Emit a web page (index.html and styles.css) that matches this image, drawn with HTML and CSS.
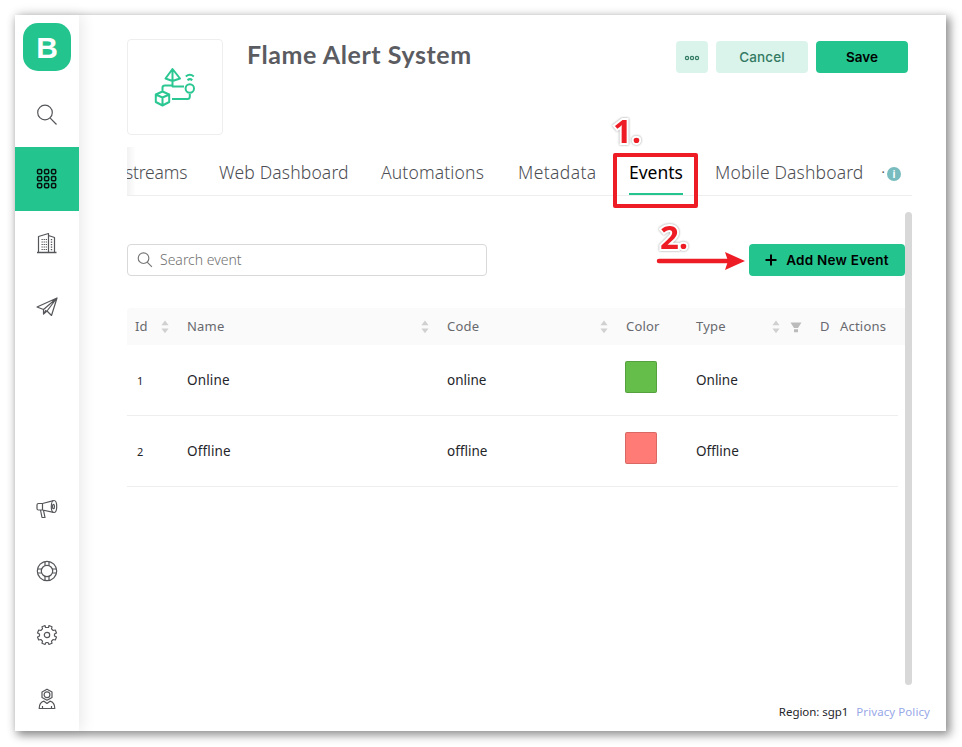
FILE: index.html
```html
<!DOCTYPE html>
<html lang="en">
<head>
<meta charset="utf-8">
<title>Flame Alert System</title>
<link rel="stylesheet" href="styles.css">
</head>
<body>
<svg width="0" height="0" class="defs">
  <symbol id="sorter" viewBox="0 0 8 14"><path d="M4 .5 7.6 5.2H.4zM4 13.2.4 8.5h7.2z" fill="#d0d0d0"/></symbol>
  <symbol id="search" viewBox="0 0 22 22"><circle cx="9" cy="8.500" r="7.300"/><path d="M14 13.800 20.500 20.500"/></symbol>
</svg>
<div class="window">
  <nav class="sidebar">
    <div class="logo">B</div>
    <a class="nav-item"><svg class="icon" viewBox="0 0 22 22"><use href="#search"/></svg></a>
    <a class="nav-item active"><svg class="icon grid-icon" viewBox="0 0 22 22">
      <rect x="1.500" y="1.500" width="4.200" height="4.200" rx="1.200"/><rect x="8.500" y="1.500" width="4.200" height="4.200" rx="1.200"/><rect x="15.500" y="1.500" width="4.200" height="4.200" rx="1.200"/>
      <rect x="1.500" y="8.500" width="4.200" height="4.200" rx="1.200"/><rect x="8.500" y="8.500" width="4.200" height="4.200" rx="1.200"/><rect x="15.500" y="8.500" width="4.200" height="4.200" rx="1.200"/>
      <rect x="1.500" y="15.500" width="4.200" height="4.200" rx="1.200"/><rect x="8.500" y="15.500" width="4.200" height="4.200" rx="1.200"/><rect x="15.500" y="15.500" width="4.200" height="4.200" rx="1.200"/></svg></a>
    <a class="nav-item"><svg class="icon" viewBox="0 0 22 22"><path d="M1 20.500h19.500" stroke-width="1.500"/><path d="M2.500 20V4.500L12.500 1.500V20M12.500 3.500 18.500 5.500V20"/><path d="M5.500 7.500h5.500M5.500 10h5.500M5.500 12.500h5.500M5.500 15h5.500M5.500 17.500h5.500" stroke-dasharray="1.300 .8" stroke-width="1.200"/><path d="M15.500 7v11.500" stroke-width="1.400" stroke-dasharray="1.300 1.200"/></svg></a>
    <a class="nav-item"><svg class="icon" viewBox="0 0 22 22"><path d="M1 11 21 2 15.500 19.500 11 15 7.500 18V13.500zM7.500 13.500 21 2 11 15M7.500 18 10 14"/></svg></a>
    <div class="spacer"></div>
    <a class="nav-item"><svg class="icon horn" viewBox="0 0 22 22"><path d="M2.500 5.500H6.500V12H2.500Q1 12 1 10.500V7Q1 5.500 2.500 5.500zM6.500 5.500 17.500 2.700M6.500 12 17.500 14.300M4.500 12 6 19.500H9L7.500 12.300"/><ellipse cx="18" cy="8.500" rx="2.700" ry="6"/><ellipse cx="17.500" cy="8.500" rx="1" ry="2.200"/></svg></a>
    <a class="nav-item"><svg class="icon" viewBox="0 0 22 22"><circle cx="11" cy="11" r="9.700"/><circle cx="11" cy="11" r="5.700"/><path d="M9 1.500V5.700M13 1.500V5.700M9 16.300v4.200M13 16.300v4.200M1.500 9h4.200M1.500 13h4.200M16.300 9h4.200M16.300 13h4.200"/></svg></a>
    <a class="nav-item"><svg class="icon" viewBox="0 0 22 22"><path d="M9 1.500 9.500 3.500H12.500L13 1.500 16 2.700 15.500 4.800 17.200 6.500 19.300 6 20.500 9 18.500 10V12L20.500 13 19.300 16 17.200 15.500 15.500 17.200 16 19.300 13 20.500 12 18.500H10L9 20.500 6 19.300 6.500 17.200 4.800 15.500 2.700 16 1.500 13 3.500 12V10L1.500 9 2.700 6 4.800 6.500 6.500 4.800 6 2.700z"/><circle cx="11" cy="11" r="2.700"/></svg></a>
    <a class="nav-item"><svg class="icon" viewBox="0 0 22 22"><path d="M11 1.200 16 4V9.500L11 12.200 6 9.500V4zM3.200 20.500Q3.200 14.500 8 13.200L11 15.500 14 13.200Q18.800 14.500 18.800 20.500zM6.500 20v-2M15.500 20v-2"/><circle cx="11" cy="6.700" r="2.900"/></svg></a>
  </nav>
  <main class="main">
    <header class="header">
      <div class="thumb"><svg class="device-icon" viewBox="0 0 44 44">
        <path d="M19.500 3 12.500 12.500 19.500 15 27 12.500zM19.500 3V15M19.500 15.500V20.500H31M9.500 25V21.500Q9.500 19.500 12 19.500H19.500M9.500 25.500 16.200 28.500V36L9.500 39.500 2.800 36V28.500zM2.800 28.500 9.500 31.500 16.200 28.500M9.500 31.500V39.500M19 33H34.500Q36.800 33 36.800 30.500V28M32.800 10.500Q36.800 7 40.800 10.500M34.500 14.200Q36.800 12 39.300 14.200"/><circle cx="36.800" cy="22.500" r="4.200"/></svg></div>
      <h1 class="title">Flame Alert System</h1>
      <div class="actions">
        <button class="btn light more"><svg width="16" height="6" viewBox="0 0 16 6"><circle cx="3" cy="3" r="1.600"/><circle cx="8" cy="3" r="1.600"/><circle cx="13" cy="3" r="1.600"/></svg></button>
        <button class="btn light cancel">Cancel</button>
        <button class="btn save">Save</button>
      </div>
    </header>
    <div class="tabs">
      <a class="tab streams">streams</a>
      <a class="tab web">Web Dashboard</a>
      <a class="tab automations">Automations</a>
      <a class="tab metadata">Metadata</a>
      <a class="tab events">Events</a>
      <a class="tab mobile">Mobile Dashboard</a>
      <span class="more-dot">·</span><span class="info">i</span>
    </div>
    <section class="content">
      <div class="toolbar">
        <label class="search"><svg class="search-icon" viewBox="0 0 22 22"><use href="#search"/></svg><span>Search event</span></label>
        <button class="btn add"><svg width="12" height="12" viewBox="0 0 12 12"><path d="M6 .5v11M.5 6h11"/></svg><span>Add New Event</span></button>
      </div>
      <div class="table">
        <div class="row head">
          <div class="cell">Id<svg class="sorter"><use href="#sorter"/></svg></div>
          <div class="cell">Name<svg class="sorter"><use href="#sorter"/></svg></div>
          <div class="cell">Code<svg class="sorter"><use href="#sorter"/></svg></div>
          <div class="cell">Color</div>
          <div class="cell type">Type<svg class="sorter"><use href="#sorter"/></svg><svg class="filter" viewBox="0 0 12 11"><path d="M.5.500h11L8 6H4zM4 7.200h4v3H4z"/></svg></div>
          <div class="cell desc">D</div>
          <div class="cell">Actions</div>
        </div>
        <div class="row item">
          <div class="cell id">1</div><div class="cell name">Online</div><div class="cell">online</div>
          <div class="cell"><i class="swatch green"></i></div><div class="cell">Online</div>
        </div>
        <div class="row item">
          <div class="cell id">2</div><div class="cell name">Offline</div><div class="cell">offline</div>
          <div class="cell"><i class="swatch red"></i></div><div class="cell">Offline</div>
        </div>
      </div>
    </section>
    <footer class="footer"><span class="region">Region: sgp1</span><a class="privacy">Privacy Policy</a></footer>
    <div class="scrollbar"></div>
  </main>
</div>
<div class="note-box"></div>
<div class="note one">1.</div>
<div class="note two">2.</div>
<svg class="note-arrow" viewBox="0 0 90 20"><path d="M3 10H74" stroke="#ee1c25" stroke-width="4.500" stroke-linecap="round"/><path d="M69 1 89 10 69 19 72 10z" fill="#ee1c25"/></svg>
</body>
</html>
```
FILE: styles.css
```css
* { box-sizing: border-box; }
body {
  margin: 0;
  width: 962px;
  height: 747px;
  padding: 15px;
  overflow: hidden;
  background: #fff;
  color: #24252a;
  font: 300 14px "Noto Sans", sans-serif;
}
.defs { position: absolute; }
.window {
  display: flex;
  width: 931px;
  height: 716px;
  background: #fff;
  box-shadow: 3px 3px 9px 1px rgba(0, 0, 0, .45);
}
.sidebar {
  display: flex;
  flex-direction: column;
  width: 64px;
  padding-top: 8px;
  box-shadow: 3px 0 14px rgba(0, 0, 0, .09);
}
.logo {
  width: 48px;
  height: 48px;
  margin: 0 8px 12px;
  border-radius: 15px;
  background: #24c48e;
  color: #fff;
  font: 700 30px/49px "Liberation Sans", sans-serif;
  text-align: center;
}
.nav-item {
  display: flex;
  align-items: center;
  justify-content: center;
  height: 64px;
}
.active { background: #24c48e; }
.icon {
  width: 22px;
  height: 22px;
  fill: none;
  stroke: #55565a;
  stroke-width: 1.2;
  stroke-linejoin: round;
}
.horn { margin-top: 4px; }
.grid-icon { stroke: #07130f; stroke-width: 1.5; }
.spacer { flex: 1; }

.main {
  position: relative;
  display: flex;
  flex-direction: column;
  flex: 1;
  padding: 24px 16px 0 48px;
}
.header { display: flex; align-items: flex-start; height: 108px; padding-right: 22px; }
.thumb {
  width: 96px;
  height: 96px;
  padding: 26px 25px 24px;
  border: 1px solid #eee;
  border-radius: 4px;
}
.device-icon {
  display: block;
  width: 44px;
  height: 44px;
  fill: none;
  stroke: #2bc793;
  stroke-width: 2;
  stroke-linejoin: round;
}
.title {
  flex: 1;
  margin: 0 0 0 24px;
  color: #5b5c61;
  font: 700 25px/31px Lato, sans-serif;
  letter-spacing: .57px;
  white-space: nowrap;
}
.actions { display: flex; gap: 8px; padding-top: 2px; }
.btn {
  display: flex;
  align-items: center;
  justify-content: center;
  height: 32px;
  padding: 0;
  border: 0;
  border-radius: 4px;
  background: #24c48e;
  color: #000;
  font: 600 13.5px Inter, sans-serif;
}
.light { background: #daf4eb; color: #347b64; }
.more { width: 32px; fill: none; stroke: #347b64; stroke-width: 1.2; }
.more svg { margin-top: 2px; }
.cancel, .save { width: 92px; }
.cancel { font-weight: 500; letter-spacing: .15px; }
.tabs {
  display: flex;
  align-items: center;
  gap: 32px;
  width: 785px;
  height: 49px;
  border-bottom: 1px solid #eee;
  background: linear-gradient(90deg, #f2f2f2, #fff 9px);
  overflow: hidden;
  color: #4c4d52;
  font-size: 17.5px;
  font-weight: 300;
  white-space: nowrap;
}
.tab { flex: none; height: 48px; line-height: 51px; letter-spacing: .15px; }
.streams { width: 61px; margin-left: -1px; letter-spacing: -.2px; text-indent: -1px; }
.web { width: 130px; }
.automations { width: 105px; }
.metadata { width: 79px; letter-spacing: .4px; }
.events { width: 54px; border-bottom: 2px solid #24c48e; color: #000; font-weight: 400; letter-spacing: 0; }
.mobile { width: 149px; }
.more-dot { width: 4px; margin: 0 -32px 0 -15px; }
.info {
  width: 14px;
  height: 14px;
  margin: 5px 0 0 2px;
  border-radius: 7px;
  background: #79bcbf;
  color: #fff;
  font: 700 10px/14px "Noto Sans", sans-serif;
  text-align: center;
}
.content { flex: 1; width: 778px; padding-top: 48px; }
.toolbar { display: flex; justify-content: space-between; height: 64px; }
.search {
  display: flex;
  align-items: center;
  gap: 7px;
  width: 360px;
  height: 32px;
  padding: 0 0 1px 9px;
  border: 1px solid #d9d9d9;
  border-radius: 4px;
  color: #707070;
}
.search-icon { width: 16px; height: 16px; fill: none; stroke: #777; stroke-width: 1.6; }
.add { gap: 9px; width: 156px; stroke: #000; stroke-width: 2; letter-spacing: .25px; }
.add span { stroke: none; }
.row {
  display: grid;
  grid-template-columns: 52px 260px 179px 70px 124px 20px 73px;
}
.head { height: 37px; background: #fafafa; color: #68696e; border-radius: 4px 0 0; font-size: 13px; font-weight: 400; letter-spacing: .2px; }
.item { width: 771px; height: 71px; border-bottom: 1px solid #eee; font-weight: 400; font-size: 13.5px; }
.cell { display: flex; align-items: center; padding: 0 8px 1px; min-width: 0; }
.id { padding: 1px 0 0 10px; font-size: 11px; }
.name { letter-spacing: .15px; }
.sorter { width: 8px; height: 14px; margin: 1px 2px 0 auto; }
.type .sorter { margin-right: 0; }
.filter { width: 12px; height: 11px; margin: 3px 2px 0 10px; fill: #bbb; }
.type { padding-right: 8px; }
.desc { overflow: hidden; padding-right: 4px; }
.swatch {
  width: 32px;
  height: 32px;
  margin: -6px 0 0 -1px;
  border: 1px solid rgba(0, 0, 0, .15);
  border-radius: 2px;
}
.green { background: #65be4a; }
.red { background: #ff7b76; }
.footer { display: flex; justify-content: flex-end; gap: 8px; height: 28px; font-size: 11.5px; line-height: 17px; font-weight: 400; }
.region { letter-spacing: -.05px; }
.privacy { color: #98a8e8; letter-spacing: .08px; }
.scrollbar {
  position: absolute;
  top: 197px;
  right: 34px;
  width: 7px;
  height: 473px;
  border-radius: 4px;
  background: #d8d8d8;
}
.note-box {
  position: absolute;
  left: 613px;
  top: 153px;
  width: 85px;
  height: 55px;
  border: 4px solid #ee1c25;
  border-radius: 2px;
}
.note {
  position: absolute;
  color: #ee1c25;
  font: 700 33px/40px "Open Sans", sans-serif;
  -webkit-text-stroke: 4px #fff;
  paint-order: stroke fill;
  filter: drop-shadow(0 0 1px #999);
}
.one { left: 613px; top: 111px; }
.two { left: 660px; top: 217px; }
.note-arrow { position: absolute; left: 656px; top: 251px; width: 90px; height: 20px; fill: none; }
```
